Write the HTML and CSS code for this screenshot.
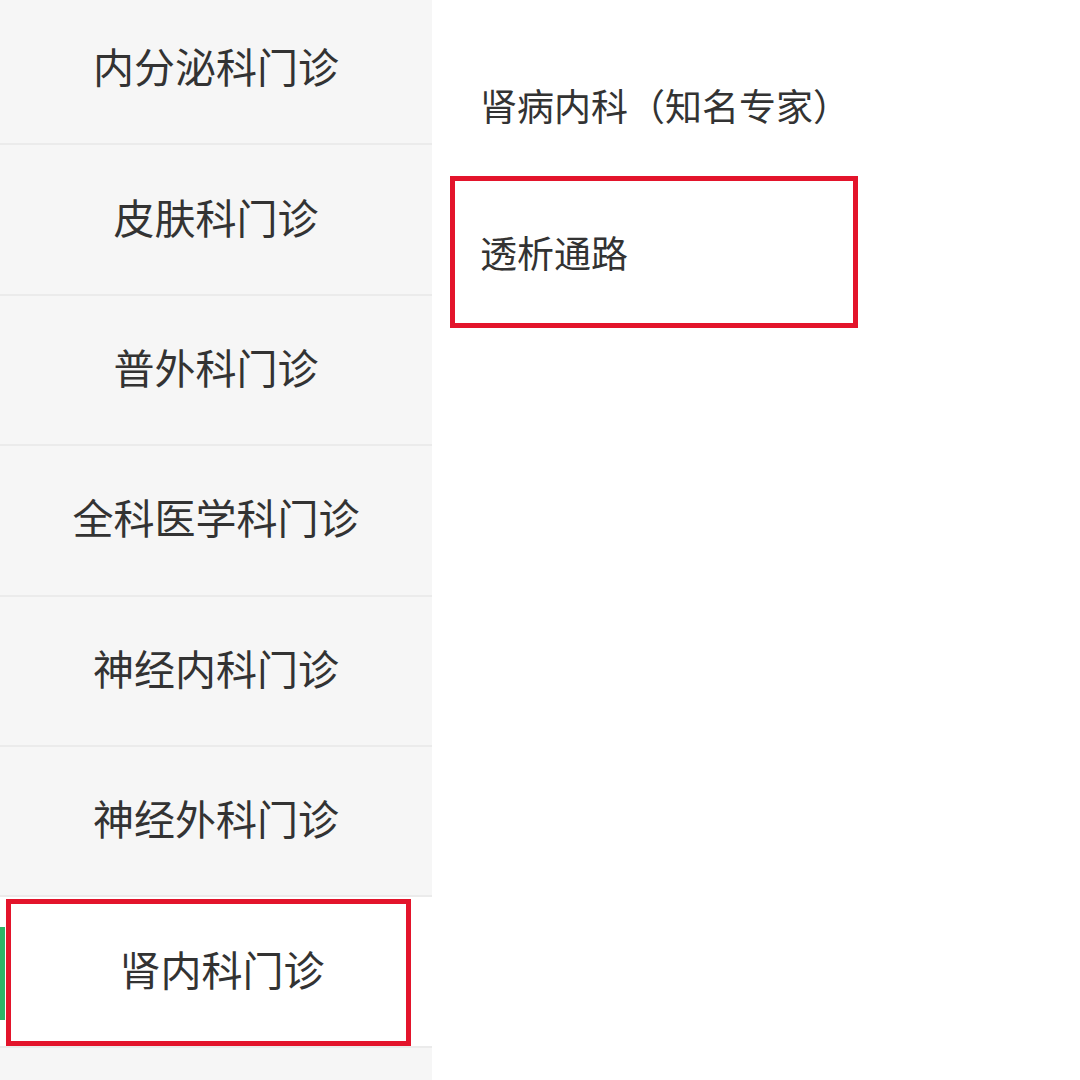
FILE: index.html
```html
<!DOCTYPE html>
<html lang="zh-CN">
<head>
<meta charset="utf-8">
<title>科室选择</title>
<link rel="stylesheet" href="styles.css">
</head>
<body>
<div class="page">
  <div class="dept-list">
    <div class="dept-item">内分泌科门诊</div>
    <div class="dept-item">皮肤科门诊</div>
    <div class="dept-item">普外科门诊</div>
    <div class="dept-item">全科医学科门诊</div>
    <div class="dept-item">神经内科门诊</div>
    <div class="dept-item">神经外科门诊</div>
    <div class="dept-item dept-item--active">
      <span class="active-bar"></span>
      <span class="active-text">肾内科门诊</span>
      <span class="mark mark--left"></span>
    </div>
    <div class="dept-item"></div>
  </div>
  <div class="sub-list">
    <div class="sub-item">肾病内科（知名专家）</div>
    <div class="sub-item sub-item--marked">
      透析通路
      <span class="mark mark--right"></span>
    </div>
  </div>
</div>
</body>
</html>
```

FILE: styles.css
```css
html, body {
  margin: 0;
  padding: 0;
  background: #ffffff;
}

body {
  font-family: "Noto Sans CJK SC", "Noto Sans", sans-serif;
  color: #333333;
}

.page {
  display: flex;
  width: 1080px;
  height: 1080px;
  overflow: hidden;
}

.dept-list {
  width: 432px;
  flex: none;
  background: #f6f6f6;
  margin-top: -5px;
}

.dept-item {
  position: relative;
  box-sizing: border-box;
  height: 150.4px;
  padding-bottom: 8px;
  border-bottom: 2px solid #ebebeb;
  display: flex;
  align-items: center;
  justify-content: center;
  font-size: 41px;
  color: #333333;
}

.dept-item--active {
  background: #ffffff;
}

.active-text {
  margin-left: 12px;
}

.active-bar {
  position: absolute;
  left: 0;
  top: 30px;
  width: 5px;
  height: 93px;
  background: #2bb467;
}

.mark {
  position: absolute;
  box-sizing: border-box;
  border: 5px solid #e3142b;
}

.mark--left {
  left: 6px;
  top: 2px;
  width: 405px;
  height: 147px;
}

.sub-list {
  flex: 1;
  padding-top: 35px;
  padding-left: 48px;
}

.sub-item {
  position: relative;
  box-sizing: border-box;
  height: 147px;
  padding-bottom: 8px;
  display: flex;
  align-items: center;
  font-size: 37px;
  color: #333333;
}

.mark--right {
  left: -30px;
  top: -6px;
  width: 408px;
  height: 152px;
}
```
